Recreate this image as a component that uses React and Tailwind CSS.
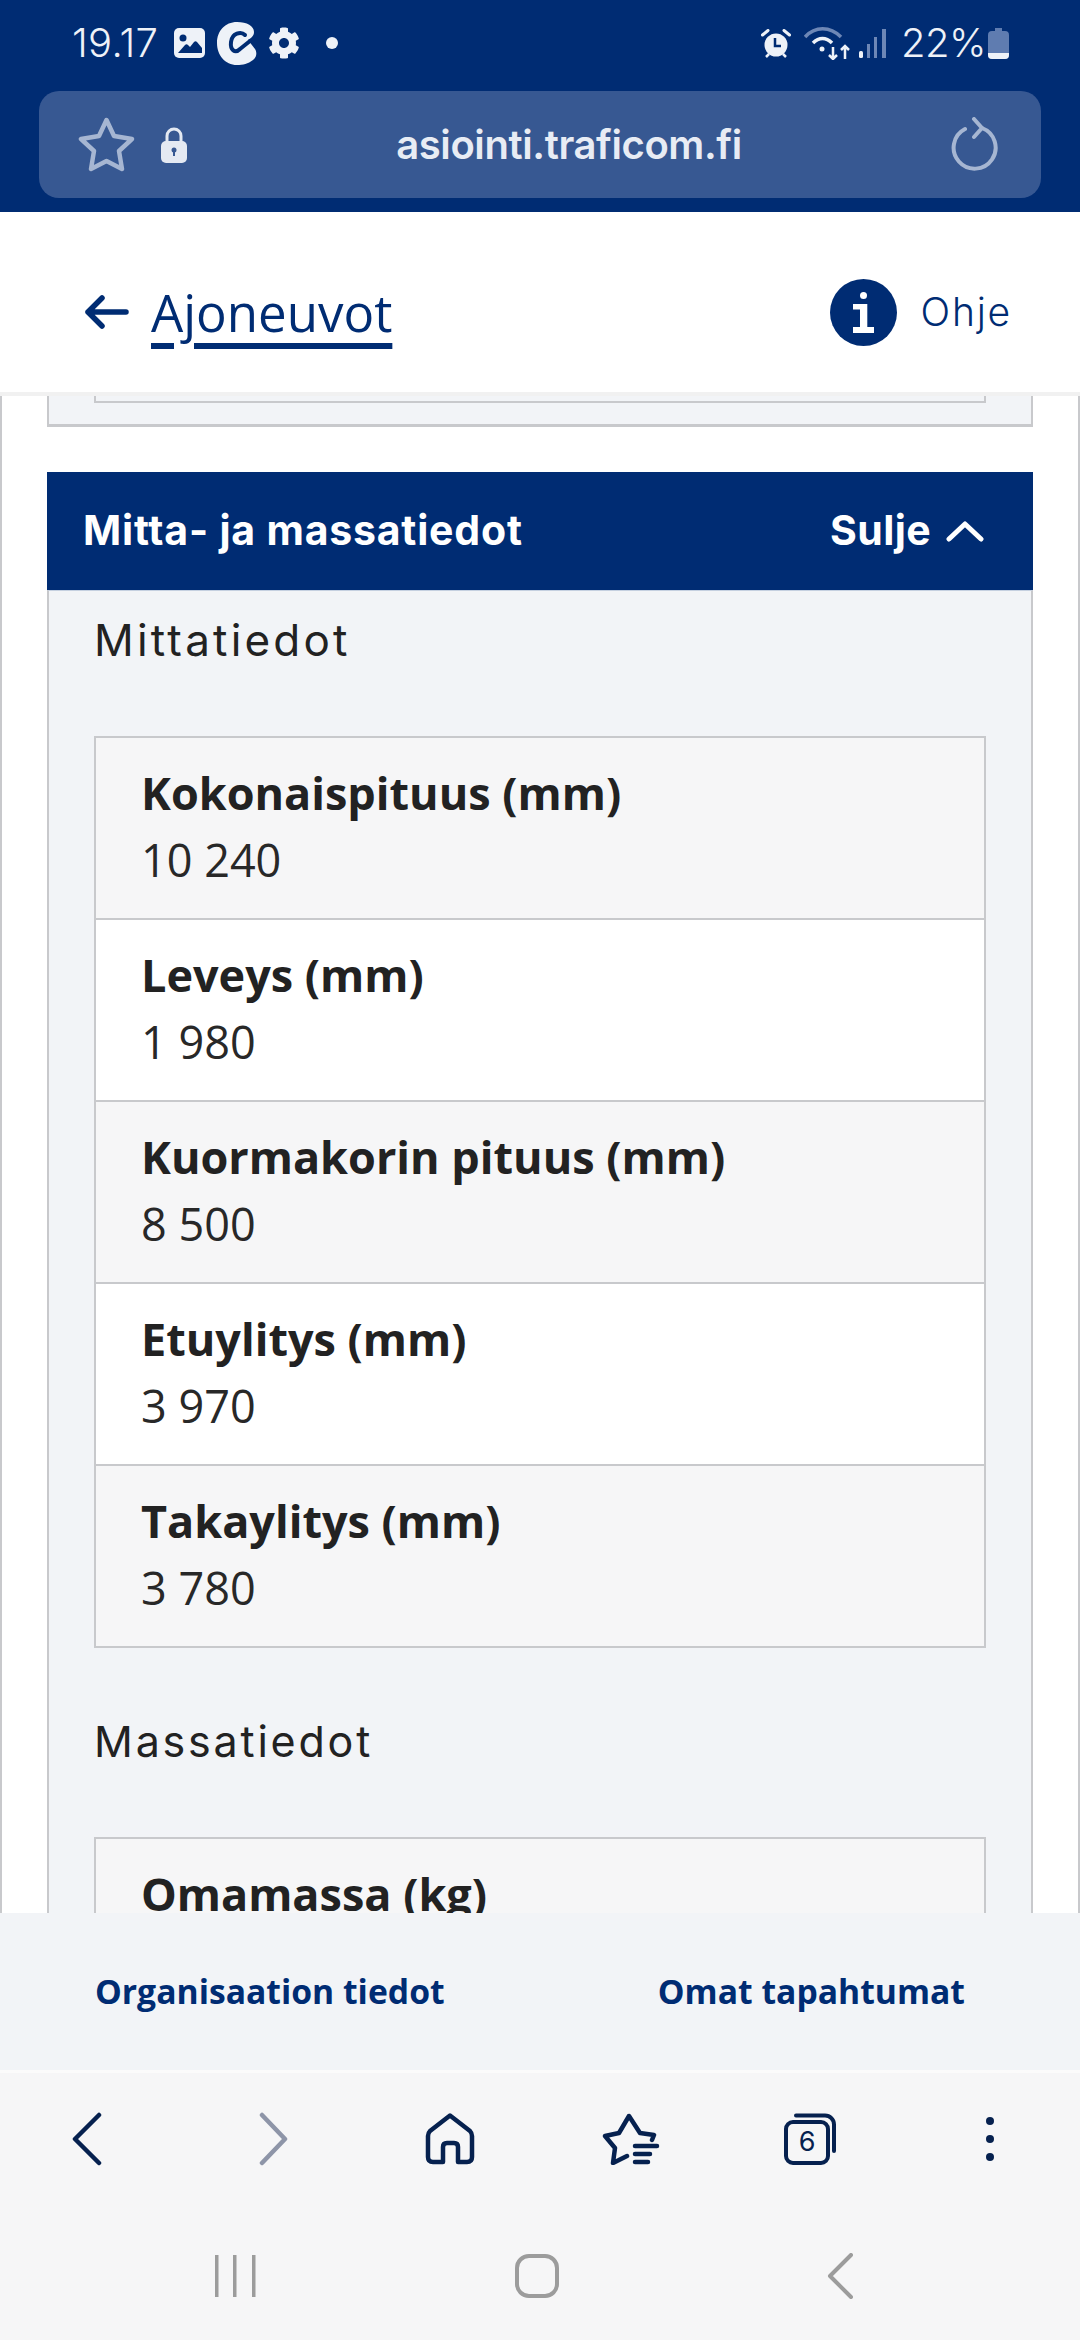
import React from "react";
import { FaCog } from "react-icons/fa";

const Row = ({ label, value, alt, first }) => (
  <div className={`px-[45px] pt-[21px] border-[#c8c9cc] ${first ? "h-[180px]" : "h-[182px] border-t-[2px]"} ${alt ? "bg-[#f6f6f7]" : "bg-white"}`}>
    <div className="text-[45px] leading-[67px] font-bold text-[#222222] whitespace-nowrap">{label}</div>
    {value ? <div className="text-[45px] leading-[67px] text-[#282828]">{value}</div> : null}
  </div>
);

export default function App() {
  return (
    <div className="w-[1080px] h-[2340px] overflow-hidden flex flex-col bg-white font-['Open_Sans',sans-serif]">
      <div className="h-[212px] shrink-0 bg-[#002c73] flex flex-col">
        <div className="h-[91px] flex items-center justify-between pl-[72px] pr-[71px] pb-[5px] text-[#eef2f8] font-['Inter',sans-serif]">
          <div className="flex items-center">
            <span className="w-[102px] text-[40px] leading-[48px] tracking-[0.3px] font-light">19.17</span>
            <svg width="31" height="30" viewBox="0 0 31 30"><rect width="31" height="30" rx="5" fill="#eef2f8"/><circle cx="9" cy="10" r="3.500" fill="#002c73"/><path d="M4 25 L11 17 C12 16 13 16 14 17 L16 19 L20 14 C21 13 22 13 23 14 L28 20 V25 Z" fill="#002c73"/></svg>
            <svg className="ml-[12px]" width="40" height="43" viewBox="0 0 40 43"><path d="M20 0 C30 0 37 4 37 10 C37 14 34 16 31 18 L38 27 C40 30 40 35 36 38 C31 42 26 43 20 43 C8 43 0 33 0 21 C0 9 8 0 20 0 Z" fill="#eef2f8"/><path d="M28 13 C24 9 15 11 14 20 C13 28 18 32 23 27 L33 19" fill="none" stroke="#002c73" strokeWidth="4" strokeLinecap="round" strokeLinejoin="round"/></svg>
            <FaCog className="ml-[11px] w-[32px] h-[32px] text-[#eef2f8]" />
            <span className="ml-[26px] w-[12px] h-[12px] rounded-full bg-[#eef2f8]" />
          </div>
          <div className="flex items-center">
            <svg width="30" height="29" viewBox="0 0 30 29"><circle cx="15" cy="16" r="11.500" fill="#eef2f8"/><path d="M14 9v8h6" stroke="#002c73" strokeWidth="2.500" fill="none"/><path d="M1.500 6 L7 1.500 M28.500 6 L23 1.500" stroke="#eef2f8" strokeWidth="3" strokeLinecap="round"/><path d="M5 28l3-3M25 28l-3-3" stroke="#eef2f8" strokeWidth="2.500"/></svg>
            <svg className="ml-[13px]" width="46" height="33" viewBox="0 0 46 33" fill="none"><path d="M1 10 C11 -1 26 -1 37 10" stroke="#6d87b6" strokeWidth="3.500"/><path d="M9 16 C15 10 22 10 28 16" stroke="#eef2f8" strokeWidth="3.500"/><circle cx="18" cy="22" r="2.500" fill="#eef2f8"/><path d="M29 20v12M25 28l4 4 4-4M41 32V19M37 23l4-4 4 4" stroke="#eef2f8" strokeWidth="2.500"/></svg>
            <svg className="ml-[9px]" width="27" height="29" viewBox="0 0 27 29"><rect x="0" y="22" width="4" height="7" rx="1.500" fill="#eef2f8"/><rect x="8" y="15" width="3" height="14" fill="#6d87b6"/><rect x="15" y="8" width="3" height="21" fill="#6d87b6"/><rect x="23" y="0" width="4" height="29" fill="#6d87b6"/></svg>
            <span className="ml-[15px] w-[87px] text-[40px] leading-[48px] tracking-[-0.5px] font-light">22%</span>
            <svg width="21" height="31" viewBox="0 0 21 31"><path d="M7 0h7v3h3a4 4 0 014 4v20a4 4 0 01-4 4H4a4 4 0 01-4-4V7a4 4 0 014-4h3z" fill="#5f7cb0"/><path d="M0 25h21v2a4 4 0 01-4 4H4a4 4 0 01-4-4z" fill="#eef2f8"/></svg>
          </div>
        </div>
        <div className="mx-[39px] h-[107px] rounded-[20px] bg-[#375892] flex items-center justify-between pl-[39px] pr-[42px]">
          <div className="flex items-center w-[114px]">
            <svg width="57" height="55" viewBox="0 0 57 55" fill="none"><path d="M28.500 3 L36 19 L54 22 L41 34 L44 52 L28.500 44 L13 52 L16 34 L3 22 L21 19 Z" stroke="#a6b6d2" strokeWidth="4.500" strokeLinejoin="round"/></svg>
            <svg className="ml-[26px] shrink-0" width="26" height="36" viewBox="0 0 26 36"><path d="M6 15V9a7 7 0 0114 0v6" fill="none" stroke="#e4e9f2" strokeWidth="3"/><rect x="0" y="14" width="26" height="22" rx="5" fill="#e4e9f2"/><circle cx="13" cy="23" r="2.500" fill="#375892"/><rect x="12" y="23" width="2" height="6" fill="#375892"/></svg>
          </div>
          <span className="text-[40px] font-semibold text-[#e8ecf4] font-['Inter',sans-serif] tracking-[-0.4px] mr-[5px]">asiointi.traficom.fi</span>
          <svg width="48" height="56" viewBox="0 0 48 56" fill="none"><path d="M31 11 A21 21 0 1 1 14 12" stroke="#a6b6d2" strokeWidth="4" strokeLinecap="round"/><path d="M23 2 L31 11 L23 20" stroke="#a6b6d2" strokeWidth="4" strokeLinecap="round" strokeLinejoin="round"/></svg>
        </div>
      </div>

      <div className="h-[184px] shrink-0 bg-white flex items-center justify-between pl-[84px] pr-[68px] pt-[20px] relative z-10 border-b-[4px] border-[#f1f1f1]">
        <div className="flex items-center">
          <svg width="45" height="34" viewBox="0 0 45 34" fill="none"><path d="M42 17H4M18 3L4 17l14 14" stroke="#002c73" strokeWidth="5.500" strokeLinecap="round" strokeLinejoin="round"/></svg>
          <a className="ml-[22px] text-[51px] leading-[68px] text-[#002c73] underline decoration-[length:6px] underline-offset-[11px] font-['Open_Sans',sans-serif]">Ajoneuvot</a>
        </div>
        <div className="flex items-center">
          <svg width="67" height="67" viewBox="0 0 67 67"><circle cx="33.500" cy="33.500" r="33.500" fill="#002c73"/><circle cx="33.500" cy="16.500" r="3.500" fill="white"/><path d="M23 25 H37.300 V48 H44 V54 H23 V48 H30 V30.500 H23 Z" fill="white"/></svg>
          <span className="ml-[23px] text-[39px] leading-[50px] text-[#002c73] font-['Inter',sans-serif] font-light tracking-[1.8px]">Ohje</span>
        </div>
      </div>

      <div className="flex-1 min-h-0 overflow-hidden bg-white border-x-[2px] border-[#c8c9cc] px-[45px]">
        <div className="h-[31px] bg-[#f2f4f7] border-x-[2px] border-b-[3px] border-[#c8c9cc] px-[45px]">
          <div className="h-[7px] border-x-[2px] border-b-[2px] border-[#c8c9cc]" />
        </div>
        <div className="mt-[45px] h-[118px] bg-[#002c73] flex items-center justify-between pl-[36px] pr-[49px] text-white text-[41px] font-bold font-['Inter',sans-serif]">
          <span className="tracking-[0.8px]">Mitta- ja massatiedot</span>
          <span className="flex items-center gap-[15px] tracking-[0.4px]">Sulje
            <svg width="38" height="24" viewBox="0 0 38 24" fill="none"><path d="M3 20 L19 5 L35 20" stroke="white" strokeWidth="5" strokeLinecap="round" strokeLinejoin="round"/></svg>
          </span>
        </div>
        <div className="bg-[#f2f4f7] border-x-[2px] border-t-[1px] border-t-[#c5d0e0] border-x-[#c8c9cc] px-[45px] pb-[60px]">
          <h2 className="text-[44px] leading-[50px] pt-[24px] text-[#222222] font-['Inter',sans-serif] font-normal tracking-[3.200px]">Mittatiedot</h2>
          <div className="mt-[71px] border-[2px] border-[#c8c9cc]">
            <Row first alt label="Kokonaispituus (mm)" value="10 240" />
            <Row label="Leveys (mm)" value="1 980" />
            <Row alt label="Kuormakorin pituus (mm)" value="8 500" />
            <Row label="Etuylitys (mm)" value="3 970" />
            <Row alt label="Takaylitys (mm)" value="3 780" />
          </div>
          <h2 className="text-[43px] leading-[50px] mt-[68px] text-[#222222] font-['Inter',sans-serif] font-normal tracking-[2.800px]">Massatiedot</h2>
          <div className="mt-[71px] border-[2px] border-[#c8c9cc]">
            <Row first alt label="Omamassa (kg)" />
          </div>
        </div>
      </div>

      <div className="h-[157px] shrink-0 bg-[#f2f4f7] flex items-center justify-between pl-[95px] pr-[115px] text-[#002c73] text-[33.7px] font-bold relative z-10">
        <span>Organisaation tiedot</span>
        <span>Omat tapahtumat</span>
      </div>
      <div className="h-[3px] shrink-0 bg-[#fbfbfb]" />
      <div className="h-[267px] shrink-0 bg-[#f6f6f7] flex flex-col">
        <div className="h-[132px] flex items-center justify-start pl-[71px]">
          <svg width="31" height="54" viewBox="0 0 31 54" fill="none"><path d="M28 3 L4 27 L28 51" stroke="#06214f" strokeWidth="4.500" strokeLinecap="round" strokeLinejoin="round"/></svg>
          <svg className="ml-[156px]" width="30" height="54" viewBox="0 0 30 54" fill="none"><path d="M4 3 L27 27 L4 51" stroke="#8e95a8" strokeWidth="4.500" strokeLinecap="round" strokeLinejoin="round"/></svg>
          <svg className="ml-[137px]" width="50" height="52" viewBox="0 0 50 52" fill="none"><path d="M25 2.500 L45 18 Q47 20 47 23 V44 Q47 49 42 49 H33 V34 Q33 30 29 30 H22 Q18 30 18 34 V49 H8 Q3 49 3 44 V23 Q3 20 5 18 Z" stroke="#06214f" strokeWidth="4.500" strokeLinejoin="round"/></svg>
          <svg className="ml-[127px]" width="58" height="52" viewBox="0 0 58 52" fill="none"><path d="M50 27 L52 22 L38 20 L27 3 L17 20 L3 23 L13 35 L11 50 L25 43" stroke="#06214f" strokeWidth="4.500" strokeLinecap="round" strokeLinejoin="round"/><path d="M33 33H55M33 41H48M33 49H46" stroke="#06214f" strokeWidth="4.500" strokeLinecap="round"/></svg>
          <div className="ml-[123px] relative w-[54px] h-[52px]">
            <svg width="54" height="52" viewBox="0 0 54 52" fill="none"><path d="M13 2.500 H42 a9 9 0 019 9 V38" stroke="#06214f" strokeWidth="4" strokeLinecap="round"/><rect x="3" y="9" width="42" height="41" rx="7" stroke="#06214f" strokeWidth="4"/></svg>
            <span className="absolute left-[3px] top-[9px] w-[42px] h-[41px] flex items-center justify-center text-[27px] text-[#06214f] font-['Inter',sans-serif]">6</span>
          </div>
          <div className="ml-[149px] flex flex-col gap-[10px]">
            <span className="w-[8px] h-[8px] rounded-full bg-[#06214f]" />
            <span className="w-[8px] h-[8px] rounded-full bg-[#06214f]" />
            <span className="w-[8px] h-[8px] rounded-full bg-[#06214f]" />
          </div>
        </div>
        <div className="h-[135px] flex items-center justify-start pl-[213px] pt-[6px]">
          <svg width="44" height="42" viewBox="0 0 44 42" fill="#9c9c9c"><rect x="2" y="0" width="3.500" height="42"/><rect x="20" y="0" width="3.500" height="42"/><rect x="39" y="0" width="3.500" height="42"/></svg>
          <svg className="ml-[258px]" width="44" height="44" viewBox="0 0 44 44" fill="none"><rect x="2" y="2" width="40" height="40" rx="12" stroke="#9c9c9c" strokeWidth="4"/></svg>
          <svg className="ml-[267px]" width="28" height="46" viewBox="0 0 28 46" fill="none"><path d="M25 2 L4 23 L25 44" stroke="#9c9c9c" strokeWidth="4" strokeLinecap="round" strokeLinejoin="round"/></svg>
        </div>
      </div>
    </div>
  );
}
